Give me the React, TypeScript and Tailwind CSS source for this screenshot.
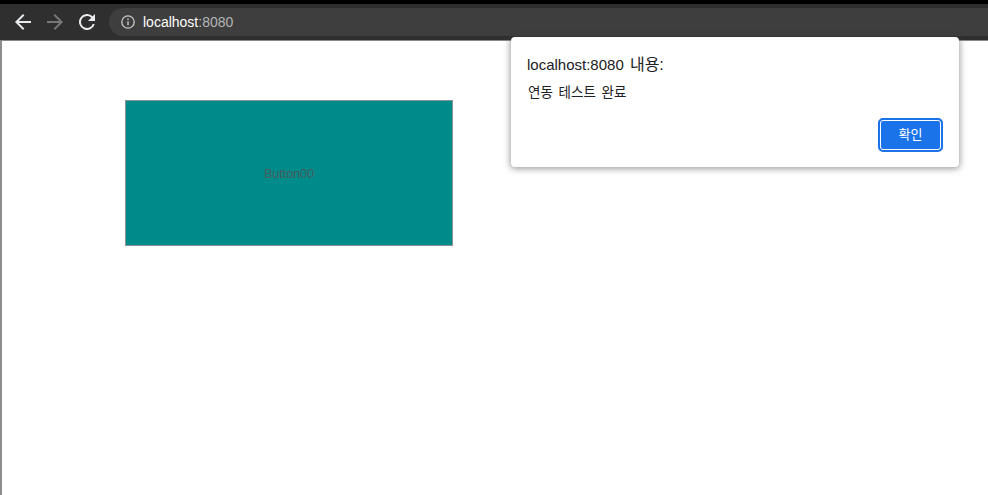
const ui = "font-['Liberation_Sans','Noto_Sans_CJK_KR',sans-serif]";

function Back({ color }: { color: string }) {
  return (
    <svg width="16" height="16" viewBox="0 0 16 16">
      <path d="M16 7H3.8l5.6-5.6L8 0 0 8l8 8 1.4-1.4L3.8 9H16z" fill={color} />
    </svg>
  );
}

function Forward({ color }: { color: string }) {
  return (
    <svg width="16" height="16" viewBox="0 0 16 16">
      <path d="M0 7h12.2L6.6 1.4 8 0l8 8-8 8-1.4-1.4L12.2 9H0z" fill={color} />
    </svg>
  );
}

function Reload() {
  return (
    <svg width="16" height="16" viewBox="0 0 16 16">
      <path
        d="M13.65 2.35A8 8 0 1 0 15.73 10h-2.08A6 6 0 1 1 8 2c1.66 0 3.14.69 4.22 1.78L9 7h7V0z"
        fill="#e8eaed"
      />
    </svg>
  );
}

function Info() {
  return (
    <svg width="14" height="14" viewBox="0 0 14 14" fill="none">
      <circle cx="7" cy="7" r="6.2" stroke="#c4c7ca" strokeWidth="1.3" />
      <path d="M6.3 6.2h1.4v4H6.3zM6.3 3.6h1.4V5H6.3z" fill="#c4c7ca" />
    </svg>
  );
}

export default function App() {
  return (
    <div className={`relative flex h-[495px] w-[988px] flex-col overflow-hidden bg-white ${ui}`}>
      <div className="h-1 bg-black" />
      <header className="flex h-[37px] items-center border-b border-[#8a8a8a] bg-[#2f2f2f] pl-[15px]">
        <Back color="#e8eaed" />
        <div className="ml-4">
          <Forward color="#76787a" />
        </div>
        <div className="ml-4">
          <Reload />
        </div>
        <div className="ml-[14px] flex h-7 flex-1 items-center rounded-l-full bg-[#3e3e3e] pl-3">
          <Info />
          <span className="ml-[8px] text-[14px] font-medium text-white">
            localhost<span className="font-normal text-[#b4b6b8]">:8080</span>
          </span>
        </div>
      </header>

      <main className="flex-1 border-l-2 border-[#8d8d8d] pl-[123px] pt-[59px]">
        <button className="flex h-[146px] w-[328px] items-center justify-center border border-[#8c9493] bg-[#008b8b] pt-[2px] text-[12.5px] text-[#4a5a5c]">
          Button00
        </button>
      </main>

      <div className="absolute left-[511px] top-[37px] h-[130px] w-[448px] rounded-[4px] bg-white pl-4 pt-[18px] shadow-[0_1px_6px_1px_rgba(60,64,67,0.5)]">
        <div className="text-[15px] leading-[20px] text-[#202124] [word-spacing:2px]">
          localhost:8080 <span className="text-[16px]">내용:</span>
        </div>
        <div className="mt-[8px] pl-px text-[13.5px] leading-[20px] text-[#202124] [word-spacing:2px]">연동 테스트 완료</div>
        <button className="absolute left-[367px] top-[81px] flex h-[34px] w-[65px] items-center justify-center rounded-[5px] border-2 border-[#1a73e8] bg-[#1a73e8] text-[13px] text-white outline outline-1 -outline-offset-3 outline-white">
          확인
        </button>
      </div>
    </div>
  );
}
